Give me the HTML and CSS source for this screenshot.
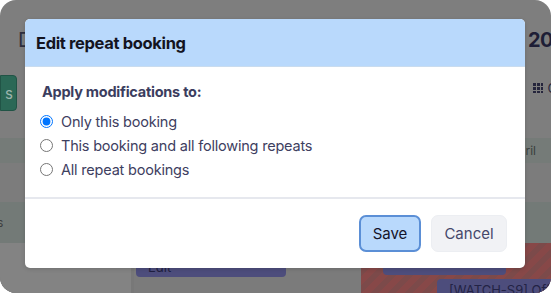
FILE: index.html
```html
<!DOCTYPE html>
<html>
<head>
<meta charset="utf-8">
<link rel="stylesheet" href="styles.css">
</head>
<body>
<div class="frame">
  <div class="app">
    <div class="topbar">
      <span class="title-left">D</span>
      <span class="title-right">r 20</span>
    </div>
    <div class="toolbar">
      <div class="green-btn">s</div>
      <div class="view-btn"><span class="grid-ico"></span>C</div>
    </div>
    <div class="row-light"><span class="month">ril</span></div>
    <div class="row-plain"></div>
    <div class="row-dark"><span class="side-s">s</span></div>
    <div class="cal">
      <div class="cal-left"></div>
      <div class="cal-sep"></div>
      <div class="cal-mid">
        <div class="ev ev-edit">Edit</div>
      </div>
      <div class="cal-right">
        <div class="ev ev-r1"></div>
        <div class="ev ev-r2">[WATCH-S9] Offline</div>
      </div>
    </div>
  </div>

  <div class="modal">
    <div class="modal-header">Edit repeat booking</div>
    <div class="modal-body">
      <div class="label">Apply modifications to:</div>
      <label class="opt"><input type="radio" name="m" checked> Only this booking</label>
      <label class="opt"><input type="radio" name="m"> This booking and all following repeats</label>
      <label class="opt"><input type="radio" name="m"> All repeat bookings</label>
    </div>
    <div class="modal-footer">
      <button class="btn btn-save">Save</button>
      <button class="btn btn-cancel">Cancel</button>
    </div>
  </div>
</div>
</body>
</html>
```
FILE: styles.css
```css
* { box-sizing: border-box; }
html, body { margin: 0; padding: 0; background: #ffffff; }
body { font-family: Inter, "Noto Sans", sans-serif; }

.frame {
  position: relative;
  width: 551px;
  height: 293px;
  border-radius: 16px;
  overflow: hidden;
  background: #7e7e7e;
}

.app { display: flex; flex-direction: column; height: 100%; }

.topbar {
  flex: 0 0 60px;
  display: flex;
  justify-content: space-between;
  align-items: flex-start;
  padding-top: 28px;
  font-size: 20px;
  line-height: 24px;
}
.title-left { padding-left: 18px; font-weight: 400; color: #2e2e3e; }
.title-right { font-weight: 700; color: #1e1e36; margin-right: -2px; letter-spacing: -0.5px; }

.toolbar {
  flex: 0 0 78px;
  display: flex;
  justify-content: space-between;
  align-items: flex-start;
  padding-top: 15px;
}
.green-btn {
  width: 17px; height: 36px;
  background: #2b6856;
  border: 1px solid #215446;
  color: #9db5ad;
  font-size: 15px;
  display: flex; align-items: center; justify-content: flex-end;
  padding-right: 3px;
  border-radius: 0 4px 4px 0;
}
.view-btn { display: flex; align-items: center; gap: 5px; color: #2a2a3e; font-size: 13px; padding-top: 5px; margin-right: -6px; }
.grid-ico {
  width: 10px; height: 10px;
  background:
    linear-gradient(#7e7e7e, #7e7e7e) 3px 0 / 1px 10px no-repeat,
    linear-gradient(#7e7e7e, #7e7e7e) 7px 0 / 1px 10px no-repeat,
    linear-gradient(#7e7e7e, #7e7e7e) 0 3px / 10px 1px no-repeat,
    linear-gradient(#7e7e7e, #7e7e7e) 0 7px / 10px 1px no-repeat,
    #25253c;
}

.row-light {
  flex: 0 0 25px;
  background: #757b78;
  display: flex; justify-content: flex-end; align-items: center;
}
.month { color: #3a3f3c; font-size: 12px; margin-right: 15px; }
.row-plain { flex: 0 0 39px; background: #7c7c7c; }
.row-dark {
  flex: 0 0 41px;
  background: #737a77;
  display: flex; align-items: center;
}
.side-s { color: #3d3d3d; font-size: 12px; margin-left: -3px; }

.cal { flex: 1 1 auto; min-height: 0; display: flex; background: #7b7b7b; }
.cal-left { flex: 0 0 131px; background: #838383; }
.cal-sep { flex: 0 0 3px; background: #787878; }
.cal-mid { flex: 0 0 227px; padding: 14px 0 0 2px; }
.cal-right {
  flex: 1 1 auto;
  min-width: 0;
  background: repeating-linear-gradient(135deg, #874848 0 6px, #7c4a4a 6px 12px);
  display: flex; flex-direction: column; align-items: flex-start;
}
.ev {
  flex: 0 0 auto;
  background: #4d4d7c;
  color: #1f1f40;
  font-size: 13px;
  border-radius: 4px;
}
.ev-edit { width: 150px; height: 20px; padding: 2px 12px; line-height: 16px; }
.ev-r1 { width: 123px; height: 20px; margin-left: 22px; margin-top: 12px; }
.ev-r2 { width: 130px; height: 20px; margin-top: 4px; margin-left: 76px; padding: 2px 12px; line-height: 18px; white-space: nowrap; overflow: hidden; border-radius: 4px 0 0 0; color: #232345; }

/* modal */
.modal {
  position: absolute;
  left: 25px; top: 19px;
  width: 500px;
  background: #ffffff;
  border-radius: 5px;
  overflow: hidden;
  box-shadow: 0 1px 4px rgba(0,0,0,0.15);
}
.modal-header {
  height: 48px;
  background: #b9d9fc;
  border-bottom: 1px solid #c9dcef;
  padding: 0 11px;
  display: flex; align-items: center;
  font-size: 16.5px;
  font-weight: 700;
  color: #14141f;
  letter-spacing: -0.35px;
}
.modal-body {
  padding: 15px 17px 16px 15px;
  color: #3b3d5e;
  border-bottom: 2px solid #e6e8ee;
}
.label { font-size: 14.5px; font-weight: 700; margin: 0 0 7px 2px; line-height: 20px; letter-spacing: -0.25px; }
.opt {
  display: flex; align-items: center;
  font-size: 14.5px;
  letter-spacing: -0.2px;
  height: 24px;
  color: #3e405f;
}
.opt input {
  margin: 0 8px 0 0;
  width: 13px; height: 13px;
}
.modal-footer {
  height: 69px;
  display: flex; justify-content: flex-end; align-items: flex-start;
  padding: 16px 18px 0 0;
  gap: 10px;
}
.btn {
  font-family: Inter, "Noto Sans", sans-serif;
  font-size: 15px;
  height: 37px;
  border-radius: 7px;
  padding: 0 10px;
}
.btn-save {
  background: #b9d9fc;
  border: 2px solid #5b8fd6;
  color: #14142a;
  width: 62px;
}
.btn-cancel {
  background: #f1f2f5;
  border: 1px solid #eceef2;
  color: #46486a;
  width: 76px;
}
```
